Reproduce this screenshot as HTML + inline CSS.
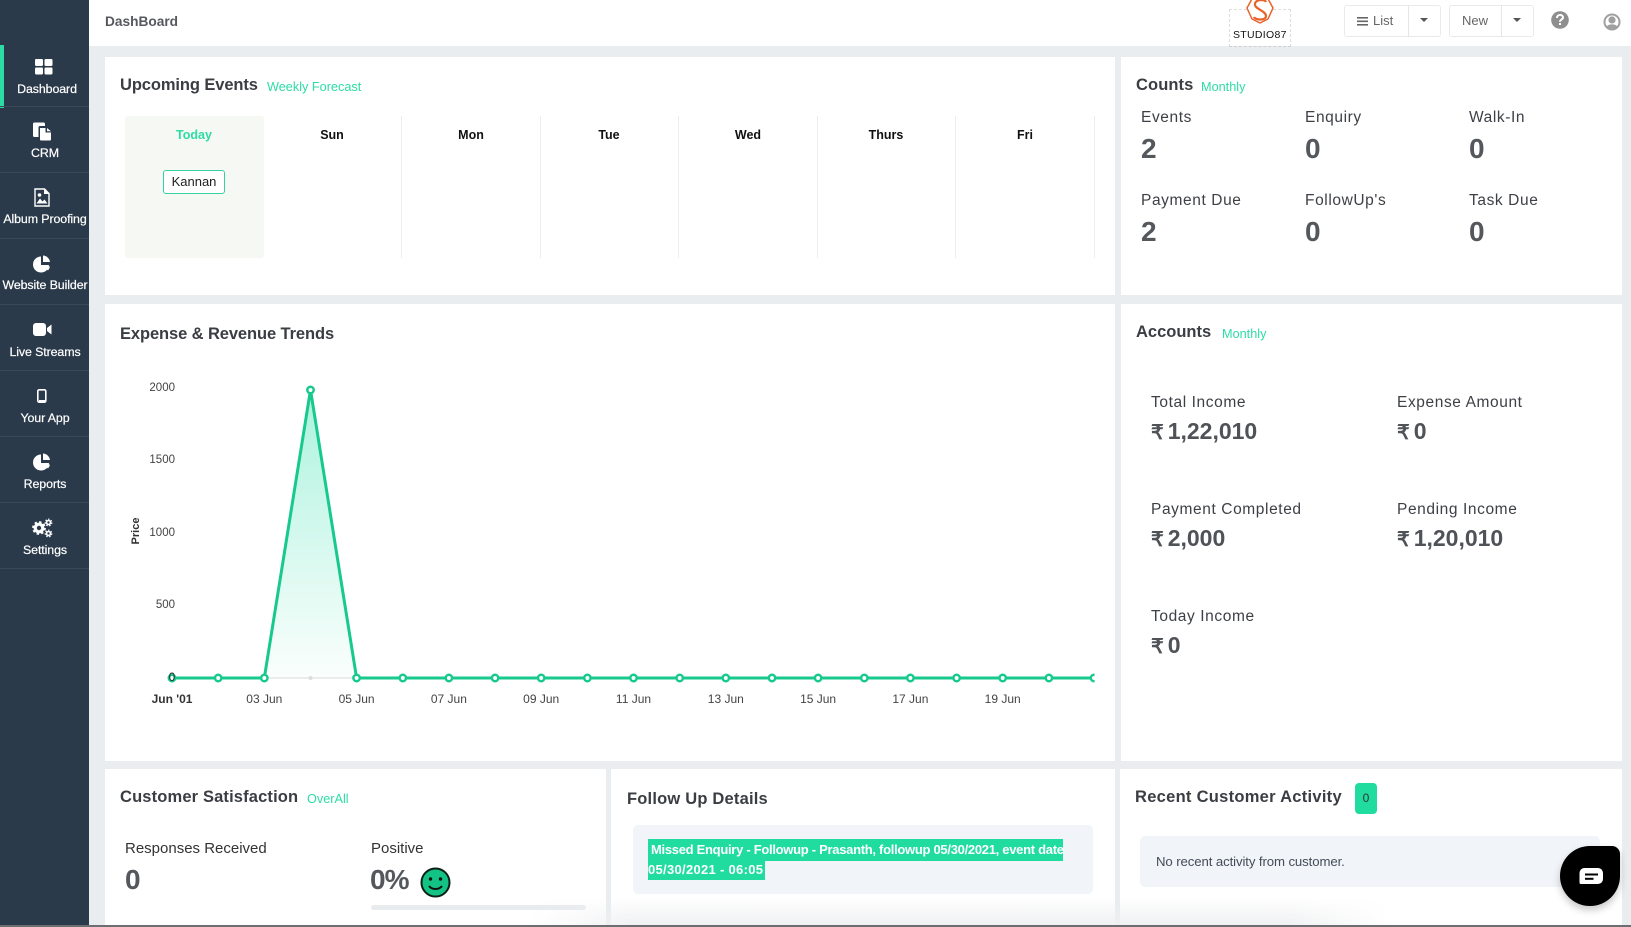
<!DOCTYPE html>
<html><head><meta charset="utf-8"><title>DashBoard</title>
<style>
*{box-sizing:border-box}
html,body{margin:0;padding:0;width:1631px;height:927px;overflow:hidden;background:#e9edf0;font-family:"Liberation Sans",sans-serif;color:#3a3d42}
.a{position:absolute;white-space:nowrap;line-height:1}
.card{position:absolute;background:#fff}
.nav{position:absolute;left:0;width:89px;height:66px;border-bottom:1px solid #3a4958}
.nl{position:absolute;left:0;width:90px;text-align:center;color:#fff;font-size:12.4px;letter-spacing:-.1px;line-height:14px;white-space:nowrap;-webkit-text-stroke:.2px #fff}
.h{font-size:16.5px;font-weight:bold;color:#3a3d42;letter-spacing:-.1px}
.t{font-size:12.7px;color:#2edca6}
.day{font-size:12.5px;font-weight:bold;color:#111;width:138px;text-align:center;top:129px}
.sep{position:absolute;top:116px;width:1px;height:142px;background:#eceeee}
.l{font-size:15.5px;color:#3d4045;letter-spacing:.6px}
.n{font-size:28px;font-weight:bold;color:#54575c}
.v{font-size:23px;font-weight:bold;color:#4f5257}
.v span{font-size:20px;letter-spacing:-.8px}
svg{position:absolute;overflow:visible}
</style></head><body>

<!-- sidebar -->
<div style="position:absolute;left:0;top:0;width:89px;height:927px;background:#2b3a4a"></div>
<div style="position:absolute;left:0;top:45px;width:4px;height:63px;background:#2ddca5"></div>
<div class="nav" style="top:41px"></div><div class="nav" style="top:107px"></div><div class="nav" style="top:173px"></div><div class="nav" style="top:239px"></div><div class="nav" style="top:305px"></div><div class="nav" style="top:371px"></div><div class="nav" style="top:437px"></div><div class="nav" style="top:503px"></div>
<div class="nl" style="top:82px;left:2px;width:90px">Dashboard</div>
<div class="nl" style="top:146px">CRM</div>
<div class="nl" style="top:212px">Album Proofing</div>
<div class="nl" style="top:278px">Website Builder</div>
<div class="nl" style="top:345px">Live Streams</div>
<div class="nl" style="top:411px">Your App</div>
<div class="nl" style="top:477px">Reports</div>
<div class="nl" style="top:543px">Settings</div>

<svg style="left:35px;top:59px" width="18" height="16" fill="#fff"><rect width="8" height="7" rx="1.2"/><rect x="9.5" width="8" height="7" rx="1.2"/><rect y="8.5" width="8" height="7" rx="1.2"/><rect x="9.5" y="8.5" width="8" height="7" rx="1.2"/></svg>
<svg style="left:33px;top:122px" width="19" height="19" fill="#fff"><path d="M0 2a1.500 1.500 0 0 1 1.500-1.500h9a1.500 1.500 0 0 1 1.500 1.500v2H7a1.500 1.500 0 0 0-1.500 1.500V15H1.500A1.500 1.500 0 0 1 0 13.500z"/><path d="M7 6h5.500v4.500H18v7a1 1 0 0 1-1 1H8a1 1 0 0 1-1-1zM14 6l4 3.300h-4z"/></svg>
<svg style="left:34px;top:188px" width="16" height="19" fill="none"><path d="M1 1h9.500L15 5.500V18H1z" stroke="#fff" stroke-width="1.400"/><path d="M2.500 15.500l3.500-5 2.500 3 2-2 3 4z" fill="#fff"/><circle cx="5.500" cy="7" r="1.800" fill="#fff"/><path d="M10 1v5h5z" fill="#fff"/></svg>
<svg style="left:33px;top:255px" width="18" height="18" fill="#fff"><path d="M8 1.500A8 8 0 1 0 16 10H8z"/><path d="M10 .5A7.500 7.500 0 0 1 17 7h-7z"/><path d="M10.500 11.500H17a8 8 0 0 1-2 4z"/></svg>
<svg style="left:33px;top:323px" width="19" height="13" fill="#fff"><rect width="13" height="13" rx="3"/><path d="M14 5l4.500-3.500v10L14 8z"/></svg>
<svg style="left:37px;top:389px" width="10" height="14"><rect x=".8" y=".8" width="8" height="12.400" rx="1.500" fill="none" stroke="#fff" stroke-width="1.600"/><rect x="2" y="11" width="6" height="2" fill="#fff"/></svg>
<svg style="left:33px;top:453px" width="18" height="18" fill="#fff"><path d="M8 1.500A8 8 0 1 0 16 10H8z"/><path d="M10 .5A7.500 7.500 0 0 1 17 7h-7z"/><path d="M10.500 11.500H17a8 8 0 0 1-2 4z"/></svg>
<svg style="left:32px;top:518px" width="21" height="20" fill="none" stroke="#fff"><circle cx="7" cy="10" r="3.800" stroke-width="3.200"/><circle cx="7" cy="10" r="6" stroke-width="1.800" stroke-dasharray="2.400 2.300"/><circle cx="16.500" cy="4.500" r="2" stroke-width="1.600"/><circle cx="16.500" cy="4.500" r="3.300" stroke-width="1.200" stroke-dasharray="1.500 1.500"/><circle cx="16.500" cy="15.500" r="2" stroke-width="1.600"/><circle cx="16.500" cy="15.500" r="3.300" stroke-width="1.200" stroke-dasharray="1.500 1.500"/></svg>

<!-- header -->
<div style="position:absolute;left:89px;top:0;width:1542px;height:46px;background:#fff"></div>
<div class="a" style="left:105px;top:15px;font-size:13.7px;font-weight:bold;color:#55585d">DashBoard</div>
<div style="position:absolute;left:1229px;top:9px;width:62px;height:38px;border:1px dashed #dedede;border-bottom:1px dashed #cfcfcf"></div>
<svg style="left:1246px;top:-4px" width="28" height="30" fill="none" stroke="#e8622c" stroke-width="1.500"><path d="M7 1h14l6 11-5 11-8 4-8-4-5-11z" fill="#fff" stroke-linejoin="round"/><path d="M20 6c-1-3-12-3-11 3 .5 4 11 6 11 11 0 5-11 4-12 1" stroke-width="2.200"/></svg>
<div class="a" style="left:1233px;top:30px;font-size:10.500px;color:#111;letter-spacing:.3px">STUDIO87</div>

<div style="position:absolute;left:1344px;top:5px;width:97px;height:32px;border:1px solid #e8eaec;border-radius:3px"></div>
<div style="position:absolute;left:1408px;top:5px;width:1px;height:32px;background:#e4e6e8"></div>
<svg style="left:1357px;top:16px" width="12" height="11" fill="#666"><rect width="11" height="1.600" y="1"/><rect width="11" height="1.600" y="4.500"/><rect width="11" height="1.600" y="8"/></svg>
<div class="a" style="left:1373px;top:14px;font-size:13px;color:#666">List</div>
<svg style="left:1420px;top:18px" width="9" height="5" fill="#555"><path d="M0 0h8L4 4z"/></svg>
<div style="position:absolute;left:1449px;top:5px;width:85px;height:32px;border:1px solid #e8eaec;border-radius:3px"></div>
<div style="position:absolute;left:1501px;top:5px;width:1px;height:32px;background:#e4e6e8"></div>
<div class="a" style="left:1462px;top:14px;font-size:13px;color:#666">New</div>
<svg style="left:1513px;top:18px" width="9" height="5" fill="#555"><path d="M0 0h8L4 4z"/></svg>
<svg style="left:1551px;top:11px" width="18" height="18"><circle cx="9" cy="9" r="8.800" fill="#8e8e8e"/><path d="M6 7c0-4 6-4 6-.500 0 2-3 2-3 4.300" fill="none" stroke="#fff" stroke-width="2"/><rect x="8" y="12" width="2" height="2" fill="#fff"/></svg>
<svg style="left:1603px;top:13px" width="18" height="18"><circle cx="9" cy="9" r="7.500" fill="none" stroke="#a0a0a0" stroke-width="2"/><circle cx="9" cy="7" r="3.600" fill="#a0a0a0"/><path d="M3.500 14c1-3.500 10-3.500 11 0l-2.500 2.500H6z" fill="#a0a0a0"/></svg>

<!-- upcoming events -->
<div class="card" style="left:105px;top:57px;width:1010px;height:238px"></div>
<div class="a h" style="left:120px;top:77px">Upcoming Events</div>
<div class="a t" style="left:267px;top:81px">Weekly Forecast</div>
<div style="position:absolute;left:125px;top:116px;width:139px;height:142px;background:#f6f8f3;border-radius:3px"></div>
<div class="a day" style="left:125px;color:#2edca6">Today</div>
<div class="a day" style="left:263px">Sun</div>
<div class="a day" style="left:402px">Mon</div>
<div class="a day" style="left:540px">Tue</div>
<div class="a day" style="left:679px">Wed</div>
<div class="a day" style="left:817px">Thurs</div>
<div class="a day" style="left:956px">Fri</div>
<div class="sep" style="left:401px"></div><div class="sep" style="left:540px"></div><div class="sep" style="left:678px"></div><div class="sep" style="left:817px"></div><div class="sep" style="left:955px"></div><div class="sep" style="left:1094px"></div>
<div class="a" style="left:163px;top:170px;width:62px;height:24px;border:1px solid #35d3a3;border-radius:3px;background:#fff;text-align:center;line-height:22px;font-size:13px;color:#222">Kannan</div>

<!-- counts -->
<div class="card" style="left:1121px;top:57px;width:501px;height:238px"></div>
<div class="a h" style="left:1136px;top:77px;letter-spacing:.1px">Counts</div>
<div class="a t" style="left:1201px;top:81px">Monthly</div>
<div class="a l" style="left:1141px;top:110px">Events</div>
<div class="a l" style="left:1305px;top:110px">Enquiry</div>
<div class="a l" style="left:1469px;top:110px">Walk-In</div>
<div class="a n" style="left:1141px;top:135px">2</div>
<div class="a n" style="left:1305px;top:135px">0</div>
<div class="a n" style="left:1469px;top:135px">0</div>
<div class="a l" style="left:1141px;top:193px">Payment Due</div>
<div class="a l" style="left:1305px;top:193px">FollowUp's</div>
<div class="a l" style="left:1469px;top:193px">Task Due</div>
<div class="a n" style="left:1141px;top:218px">2</div>
<div class="a n" style="left:1305px;top:218px">0</div>
<div class="a n" style="left:1469px;top:218px">0</div>

<!-- chart -->
<div class="card" style="left:105px;top:304px;width:1010px;height:457px"></div>
<div class="a h" style="left:120px;top:326px">Expense &amp; Revenue Trends</div>
<svg style="left:105px;top:304px" width="1010" height="457" font-family="Liberation Sans, sans-serif" font-size="11.500" fill="#444">
<defs><linearGradient id="g" x1="0" y1="0" x2="0" y2="1"><stop offset="0" stop-color="#19dca0" stop-opacity=".36"/><stop offset="1" stop-color="#19dca0" stop-opacity=".02"/></linearGradient>
<clipPath id="c"><rect x="-20" y="0" width="1009.500" height="457"/></clipPath></defs>
<text x="70" y="87" text-anchor="end">2000</text>
<text x="70" y="159" text-anchor="end">1500</text>
<text x="70" y="232" text-anchor="end">1000</text>
<text x="70" y="304" text-anchor="end">500</text>
<line x1="67" y1="374" x2="905" y2="374" stroke="#ececec" stroke-width="2"/>
<path d="M159.300 374L205.500 86L251.600 374Z" fill="url(#g)"/>
<circle cx="205.500" cy="374" r="2" fill="#ddd"/>
<g clip-path="url(#c)">
<path d="M67 374H159.300L205.500 86L251.600 374H989" fill="none" stroke="#18c98e" stroke-width="3"/>
<g fill="#fff" stroke="#18c98e" stroke-width="2.500">
<circle cx="67" cy="374" r="3.200"/><circle cx="113.200" cy="374" r="3.200"/><circle cx="159.300" cy="374" r="3.200"/><circle cx="205.500" cy="86" r="3.200"/><circle cx="251.600" cy="374" r="3.200"/><circle cx="297.800" cy="374" r="3.200"/><circle cx="343.900" cy="374" r="3.200"/><circle cx="390.100" cy="374" r="3.200"/><circle cx="436.200" cy="374" r="3.200"/><circle cx="482.400" cy="374" r="3.200"/><circle cx="528.500" cy="374" r="3.200"/><circle cx="574.700" cy="374" r="3.200"/><circle cx="620.800" cy="374" r="3.200"/><circle cx="667" cy="374" r="3.200"/><circle cx="713.100" cy="374" r="3.200"/><circle cx="759.300" cy="374" r="3.200"/><circle cx="805.400" cy="374" r="3.200"/><circle cx="851.600" cy="374" r="3.200"/><circle cx="897.700" cy="374" r="3.200"/><circle cx="943.900" cy="374" r="3.200"/><circle cx="989" cy="374" r="3.200"/>
</g></g>
<text x="67" y="377" text-anchor="middle" fill="#222">0</text>
<text transform="translate(34,227) rotate(-90)" text-anchor="middle" font-weight="bold" fill="#333" font-size="11">Price</text>
<g text-anchor="middle" font-size="12">
<text x="67" y="399" font-weight="bold" fill="#333">Jun '01</text>
<text x="159.300" y="399">03 Jun</text><text x="251.600" y="399">05 Jun</text><text x="343.900" y="399">07 Jun</text><text x="436.200" y="399">09 Jun</text><text x="528.500" y="399">11 Jun</text><text x="620.800" y="399">13 Jun</text><text x="713.100" y="399">15 Jun</text><text x="805.400" y="399">17 Jun</text><text x="897.700" y="399">19 Jun</text>
</g>
</svg>

<!-- accounts -->
<div class="card" style="left:1121px;top:304px;width:501px;height:457px"></div>
<div class="a h" style="left:1136px;top:324px;letter-spacing:0">Accounts</div>
<div class="a t" style="left:1222px;top:328px">Monthly</div>
<div class="a l" style="left:1151px;top:395px">Total Income</div>
<div class="a l" style="left:1397px;top:395px">Expense Amount</div>
<div class="a v" style="left:1151px;top:420px"><span>₹ </span>1,22,010</div>
<div class="a v" style="left:1397px;top:420px"><span>₹ </span>0</div>
<div class="a l" style="left:1151px;top:502px">Payment Completed</div>
<div class="a l" style="left:1397px;top:502px">Pending Income</div>
<div class="a v" style="left:1151px;top:527px"><span>₹ </span>2,000</div>
<div class="a v" style="left:1397px;top:527px"><span>₹ </span>1,20,010</div>
<div class="a l" style="left:1151px;top:609px">Today Income</div>
<div class="a v" style="left:1151px;top:634px"><span>₹ </span>0</div>

<!-- satisfaction -->
<div class="card" style="left:105px;top:769px;width:501px;height:158px"></div>
<div class="a h" style="left:120px;top:789px;letter-spacing:.15px">Customer Satisfaction</div>
<div class="a t" style="left:307px;top:793px">OverAll</div>
<div class="a" style="left:125px;top:841px;font-size:15px;color:#333">Responses Received</div>
<div class="a" style="left:371px;top:841px;font-size:15px;color:#333">Positive</div>
<div class="a n" style="left:125px;top:866px">0</div>
<div class="a n" style="left:370px;top:866px;letter-spacing:-1px">0%</div>
<svg style="left:420px;top:867px" width="31" height="31"><circle cx="15.500" cy="15.500" r="14" fill="#13c383" stroke="#0c2018" stroke-width="2"/><circle cx="10.500" cy="12" r="1.700" fill="#111"/><circle cx="20.500" cy="12" r="1.700" fill="#111"/><path d="M9 19c3 4 10 4 13 0" fill="none" stroke="#111" stroke-width="2"/></svg>
<div style="position:absolute;left:371px;top:905px;width:215px;height:5px;border-radius:3px;background:#e9ecef"></div>

<!-- follow up -->
<div class="card" style="left:611px;top:769px;width:504px;height:158px"></div>
<div class="a h" style="left:627px;top:791px;letter-spacing:.2px">Follow Up Details</div>
<div style="position:absolute;left:633px;top:825px;width:460px;height:69px;background:#f1f4f8;border-radius:5px"></div>
<div style="position:absolute;left:648px;top:839px;width:415px;height:22px;background:#20dd9f"></div>
<div style="position:absolute;left:648px;top:860px;width:117px;height:20px;background:#20dd9f"></div>
<div class="a" style="left:651px;top:843px;font-size:13px;font-weight:bold;color:#fff;letter-spacing:-.29px">Missed Enquiry - Followup - Prasanth, followup 05/30/2021, event date</div>
<div class="a" style="left:648px;top:863px;font-size:13px;font-weight:bold;color:#fff;letter-spacing:.3px">05/30/2021 - 06:05</div>

<!-- recent -->
<div class="card" style="left:1120px;top:769px;width:502px;height:158px"></div>
<div class="a h" style="left:1135px;top:789px;letter-spacing:.28px">Recent Customer Activity</div>
<div style="position:absolute;left:1355px;top:783px;width:22px;height:31px;border-radius:4px;background:#20dd9f;text-align:center;font-size:12px;line-height:31px;color:#333">0</div>
<div style="position:absolute;left:1140px;top:836px;width:460px;height:51px;background:#f1f4f8;border-radius:5px"></div>
<div class="a" style="left:1156px;top:855px;font-size:13.2px;color:#444c58;letter-spacing:-.1px">No recent activity from customer.</div>

<!-- bottom fade + edge -->
<div style="position:absolute;left:530px;top:897px;width:860px;height:28px;background:linear-gradient(to bottom,rgba(244,245,246,0),rgba(238,239,241,.9));-webkit-mask-image:linear-gradient(to right,transparent,#000 12%,#000 88%,transparent);mask-image:linear-gradient(to right,transparent,#000 12%,#000 88%,transparent)"></div>
<div style="position:absolute;left:0;top:925px;width:1631px;height:2px;background:#6b6f72"></div>

<!-- chat -->
<div style="position:absolute;left:1560px;top:846px;width:60px;height:60px;background:#000;border-radius:30px 8px 30px 30px;box-shadow:0 4px 8px rgba(0,0,0,.22)"></div>
<svg style="left:1579px;top:867px" width="25" height="20"><path d="M5 1h14a5 5 0 0 1 5 5v6a5 5 0 0 1-5 5H2a1.500 1.500 0 0 1-1.500-1.500V6A5 5 0 0 1 5 1z" fill="#fff"/><rect x="6" y="6.500" width="13" height="2" fill="#000"/><rect x="6" y="10.800" width="8.500" height="2" fill="#000"/></svg>

</body></html>
